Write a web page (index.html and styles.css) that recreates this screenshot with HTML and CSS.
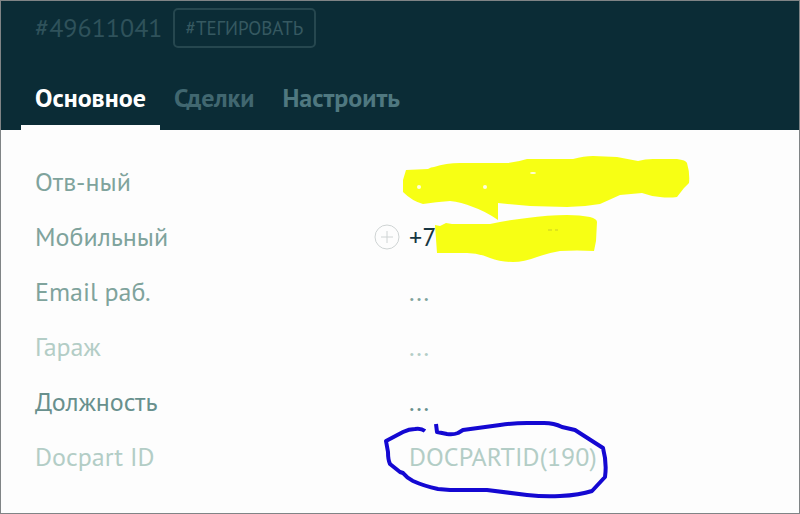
FILE: index.html
```html
<!DOCTYPE html>
<html lang="ru">
  <head>
    <meta charset="UTF-8" />
    <meta name="viewport" content="width=device-width, initial-scale=1.0" />
    <title>Контакт #49611041</title>
    <link rel="stylesheet" href="styles.css">
  </head>
  <body>
    <div class="card">
      <header class="card-header">
        <div class="card-top">
          <span class="card-id">#49611041</span>
          <button class="tag-button" type="button">#ТЕГИРОВАТЬ</button>
        </div>
        <nav class="tabs">
          <a class="tab tab-active" href="#main">Основное</a>
          <a class="tab" href="#deals">Сделки</a>
          <a class="tab tab-settings" href="#settings">Настроить</a>
        </nav>
      </header>

      <dl class="fields" id="main">
        <div class="field">
          <dt>Отв-ный</dt>
          <dd>
            <svg class="mark mark-name" viewBox="400 150 300 75" width="300" height="75" aria-hidden="true">
              <path fill="#f7ff14" d="M403 180L406 170L428 169Q431 167 434 167Q446 163 460 163L507 163Q518 162 527 159L573 159Q584 156 593 156L617 157L638 161Q645 159 653 159L677 159Q686 160 687 163Q690 173 689 183L684 188L677 197Q669 198 660 197Q650 196 642 193L620 195Q609 200 600 204Q583 207 567 207L530 206L498 203V220Q485 211 473 207Q461 202 450 201Q436 202 423 204Q412 201 403 192Z" />
              <g fill="#fffee0">
                <circle cx="419" cy="187" r="2" />
                <circle cx="485" cy="187" r="2" />
                <ellipse cx="533" cy="173" rx="3" ry="1" />
              </g>
            </svg>
          </dd>
        </div>
        <div class="field">
          <dt>Мобильный</dt>
          <dd class="phone">
            <button class="add-button" type="button" aria-label="Добавить телефон">
              <svg viewBox="0 0 26 26" width="26" height="26" fill="none" stroke="#cfd4d4">
                <circle cx="13" cy="13" r="12" />
                <path d="M7 13H19M13 7V19" />
              </svg>
            </button>
            +7
            <svg class="mark mark-phone" viewBox="430 210 175 55" width="175" height="55" aria-hidden="true">
              <path fill="#f7ff14" d="M435 225L440 226L446 223L452 224L490 224Q508 220 527 218Q548 215 567 215Q580 215 590 217Q597 219 597 222L596 241L594 251Q577 250 560 251Q548 253 537 257Q524 262 513 262Q500 262 490 258Q478 253 467 253L437 253Z" />
              <path stroke="#c9cf20" d="M548 230H552M555 230H558" />
            </svg>
          </dd>
        </div>
        <div class="field">
          <dt>Email раб.</dt>
          <dd>...</dd>
        </div>
        <div class="field field-muted">
          <dt>Гараж</dt>
          <dd>...</dd>
        </div>
        <div class="field field-dark">
          <dt>Должность</dt>
          <dd>...</dd>
        </div>
        <div class="field field-muted">
          <dt>Docpart ID</dt>
          <dd>
            DOCPARTID(190)
            <svg class="mark mark-circle" viewBox="380 420 235 85" width="235" height="85" aria-hidden="true">
              <path fill="none" stroke="#1408d2" stroke-width="4" stroke-linejoin="round" d="M425 431Q421 428 415 429Q409 429 403 432L386 441L388 452Q388 460 390 464L400 472L403 473Q407 478 413 481Q424 486 438 489L450 490L487 490L527 495Q545 497 560 496Q580 495 592 491L605 477Q607 463 603 448L589 439L575 430L562 427Q554 423 544 423L527 423Q514 423 500 425L463 430L458 433Q453 435 447 434L437 432L436 424" />
            </svg>
          </dd>
        </div>
      </dl>
    </div>
  </body>
</html>
```
FILE: styles.css
```css
* {
  box-sizing: border-box;
}

body {
  margin: 0;
  background: #fdfdfd;
  font-family: "PT Sans", "Noto Sans", sans-serif;
  font-size: 26px;
  line-height: 28px;
}

button {
  font-family: inherit;
  background: none;
  cursor: pointer;
}

.card {
  min-height: 100vh;
  border: 1px solid #808486;
}

.card-header {
  background: #0b2c36;
  color: #2f525b;
  padding: 7px 20px 0;
}

.card-top {
  display: flex;
  align-items: center;
  gap: 10px;
  padding-left: 14px;
}

.tag-button {
  height: 40px;
  padding: 0 11px;
  border: 2px solid #26474f;
  border-radius: 5px;
  color: #365961;
  font-size: 19px;
}

.tabs {
  display: flex;
  margin-top: 36px;
}

.tab {
  padding: 0 14px 13px;
  border-bottom: 5px solid transparent;
  color: #416770;
  font-weight: 700;
  text-decoration: none;
}

.tab-settings {
  color: #4f7880;
}

.tab-active {
  color: #fff;
  border-bottom-color: #fdfdfd;
}

.fields {
  margin: 0;
  padding: 24px 34px;
}

.field {
  display: grid;
  grid-template-columns: 374px 1fr;
  align-items: center;
  height: 55px;
  color: #7fa39c;
}

.field dd {
  position: relative;
  margin: 0;
}

.field-muted {
  color: #b3cdc6;
}

.field-dark {
  color: #68908d;
}

.field .phone {
  color: #173642;
}

.add-button {
  position: absolute;
  left: -35px;
  top: 1px;
  width: 26px;
  height: 26px;
  padding: 0;
  border: 0;
}

.add-button svg {
  display: block;
}

/* marker strokes drawn over the values */
.mark {
  position: absolute;
  pointer-events: none;
}

.mark-name {
  left: -9px;
  top: -32px;
}

.mark-phone {
  left: 21px;
  top: -13px;
}

.mark-circle {
  left: -29px;
  top: -23px;
}
```
